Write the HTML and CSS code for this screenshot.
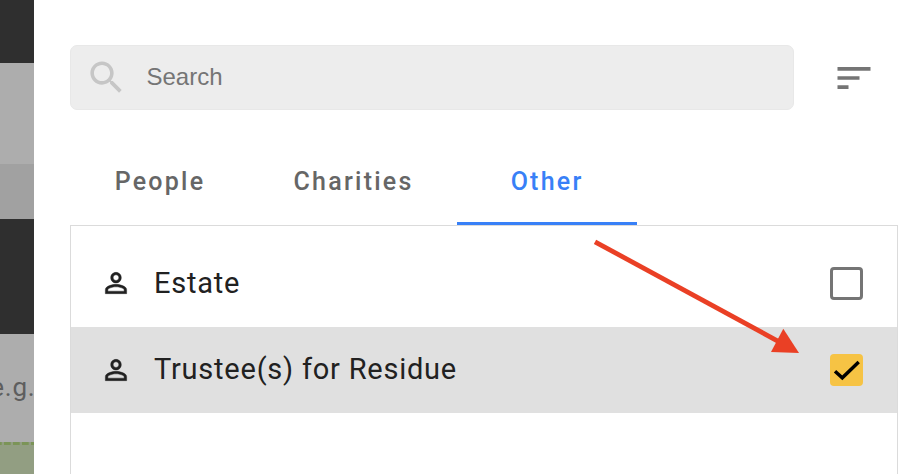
FILE: index.html
```html
<!DOCTYPE html>
<html lang="en">
<head>
    <meta charset="UTF-8">
    <meta name="viewport" content="width=device-width, initial-scale=1.0">
    <title>Select beneficiaries</title>
    <link rel="stylesheet" href="styles.css">
</head>
<body>
    <div class="page">
        <!-- page behind the drawer -->
        <div class="backdrop">
            <div class="band band-header"></div>
            <div class="band band-intro"></div>
            <div class="band band-subhead"></div>
            <div class="band band-title"></div>
            <div class="band band-hint"><span>e.g.</span></div>
            <div class="band band-drop">
                <svg width="34" height="3"><path d="M-5 1.5H34" stroke="#7b9457" stroke-width="3" stroke-dasharray="6.7 2.3"/></svg>
            </div>
        </div>

        <div class="drawer">
            <div class="toolbar">
                <label class="search">
                    <svg class="search-icon" viewBox="0 0 24 24"><path d="M15.5 14h-.79l-.28-.27C15.41 12.59 16 11.11 16 9.5 16 5.91 13.09 3 9.5 3S3 5.91 3 9.5 5.91 16 9.5 16c1.61 0 3.09-.59 4.23-1.57l.27.28v.79l5 4.99L20.49 19l-4.99-5zm-6 0C7.01 14 5 11.99 5 9.5S7.01 5 9.5 5 14 7.01 14 9.5 11.99 14 9.5 14z"/></svg>
                    <input type="text" class="search-input" placeholder="Search">
                </label>
                <svg class="sort-icon" viewBox="0 0 24 24"><path d="M3 18h6v-2H3v2zM3 6v2h18V6H3zm0 7h12v-2H3v2z"/></svg>
            </div>

            <div class="tabs">
                <div class="tab">People</div>
                <div class="tab">Charities</div>
                <div class="tab active">Other</div>
            </div>

            <div class="list">
                <div class="row">
                    <svg class="person-icon" viewBox="0 0 24 24"><path d="M12 5.9c1.16 0 2.1.94 2.1 2.1s-.94 2.1-2.1 2.1S9.9 9.16 9.9 8s.94-2.1 2.1-2.1m0 9c2.97 0 6.1 1.46 6.1 2.1v1.1H5.9V17c0-.64 3.13-2.1 6.1-2.1M12 4C9.79 4 8 5.79 8 8s1.79 4 4 4 4-1.79 4-4-1.79-4-4-4zm0 9c-2.67 0-8 1.34-8 4v3h16v-3c0-2.66-5.33-4-8-4z"/></svg>
                    <span class="name">Estate</span>
                    <span class="checkbox"></span>
                </div>
                <div class="row selected">
                    <svg class="person-icon" viewBox="0 0 24 24"><path d="M12 5.9c1.16 0 2.1.94 2.1 2.1s-.94 2.1-2.1 2.1S9.9 9.16 9.9 8s.94-2.1 2.1-2.1m0 9c2.97 0 6.1 1.46 6.1 2.1v1.1H5.9V17c0-.64 3.13-2.1 6.1-2.1M12 4C9.79 4 8 5.79 8 8s1.79 4 4 4 4-1.79 4-4-1.79-4-4-4zm0 9c-2.67 0-8 1.34-8 4v3h16v-3c0-2.66-5.33-4-8-4z"/></svg>
                    <span class="name">Trustee(s) for Residue</span>
                    <span class="checkbox checked">
                        <svg width="33" height="32" viewBox="0 0 33 32"><path d="M5 17.2l7.3 6.6L28.7 8" fill="none" stroke="#000" stroke-width="3.4"/></svg>
                    </span>
                </div>
            </div>
        </div>

        <svg class="arrow" width="206" height="116" viewBox="0 0 206 116">
            <path d="M2 3.8L188 104.8" stroke="#ea4025" stroke-width="4.8"/>
            <path d="M206 115l-15.7-24.2-12.3 23.2z" fill="#ea4025"/>
        </svg>
    </div>
</body>
</html>
```

FILE: styles.css
```css
:root {
    --blue: #3880f7;
    --yellow: #f6c344;
    --line: #dbdbdb;
    --grey: #757575;
}

* {
    margin: 0;
    padding: 0;
    box-sizing: border-box;
}

body {
    font-family: Roboto, Arial, sans-serif;
    background: #fff;
    overflow: hidden;
}

svg {
    display: block;
    flex-shrink: 0;
}

.page {
    position: relative;
    display: flex;
    width: 918px;
    height: 474px;
    overflow: hidden;
}

/* backdrop */
.backdrop {
    width: 34px;
    display: flex;
    flex-direction: column;
    overflow: hidden;
}

.band {
    flex-shrink: 0;
    background: #adadad;
}

.band-header {
    height: 63px;
    background: #2f2f2f;
}

.band-intro {
    height: 101px;
}

.band-subhead {
    height: 55px;
    background: #a1a1a1;
}

.band-title {
    height: 115px;
    background: #2f2f2f;
}

.band-hint {
    height: 108px;
    display: flex;
    align-items: center;
    justify-content: flex-end;
    padding-bottom: 2px;
    font-size: 26px;
    letter-spacing: 0.8px;
    color: #5e5e5e;
}

.band-hint span {
    margin-right: -1.5px;
}

.band-drop {
    flex: 1;
    background: #929e82;
}

/* drawer */
.drawer {
    flex: 1;
    display: flex;
    flex-direction: column;
    padding: 45px 20px 0 36px;
}

.toolbar {
    display: flex;
    align-items: center;
    justify-content: space-between;
    height: 65px;
    padding-right: 22px;
}

.search {
    display: flex;
    align-items: center;
    width: 724px;
    height: 65px;
    padding-left: 14px;
    background: #ededed;
    border: 1px solid #e8e8e8;
    border-radius: 7px;
}

.search-icon {
    width: 43px;
    height: 43px;
    margin-bottom: 1px;
    fill: #c6c6c6;
}

.search-input {
    flex: 1;
    margin-left: 18.5px;
    padding-bottom: 2px;
    border: none;
    outline: none;
    background: transparent;
    font-family: "Liberation Sans", Arial, sans-serif;
    font-size: 24px;
}

.search-input::placeholder {
    color: var(--grey);
}

.sort-icon {
    width: 44px;
    height: 44px;
    fill: var(--grey);
}

.tabs {
    display: flex;
    height: 115px;
    padding-top: 28px;
}

.tab {
    min-width: 180px;
    padding: 0 43.5px;
    border-bottom: 3px solid transparent;
    font-size: 25px;
    font-weight: 500;
    line-height: 87px;
    letter-spacing: 2.25px;
    text-align: center;
    color: #666;
}

.tab.active {
    color: var(--blue);
    border-bottom-color: var(--blue);
}

.list {
    flex: 1;
    padding-top: 14px;
    border: 1px solid var(--line);
    border-bottom: none;
}

.row {
    display: flex;
    align-items: center;
    height: 87px;
    padding: 0 34px 0 29px;
    color: #212121;
}

.row.selected {
    height: 86px;
    background: #e0e0e0;
}

.person-icon {
    width: 32px;
    height: 32px;
    margin-bottom: 1px;
    fill: currentColor;
    stroke: currentColor;
    stroke-width: 0.3;
}

.row.selected .person-icon {
    margin-bottom: 0;
}

.name {
    flex: 1;
    margin-left: 22px;
    padding-bottom: 2px;
    font-size: 29px;
    letter-spacing: 0.77px;
}

.checkbox {
    width: 33px;
    height: 33px;
    border: 3px solid var(--grey);
    border-radius: 4px;
}

.checkbox.checked {
    height: 32px;
    border: none;
    background: var(--yellow);
}

/* pointer drawn over the list */
.arrow {
    position: absolute;
    left: 593px;
    top: 238px;
}
```
